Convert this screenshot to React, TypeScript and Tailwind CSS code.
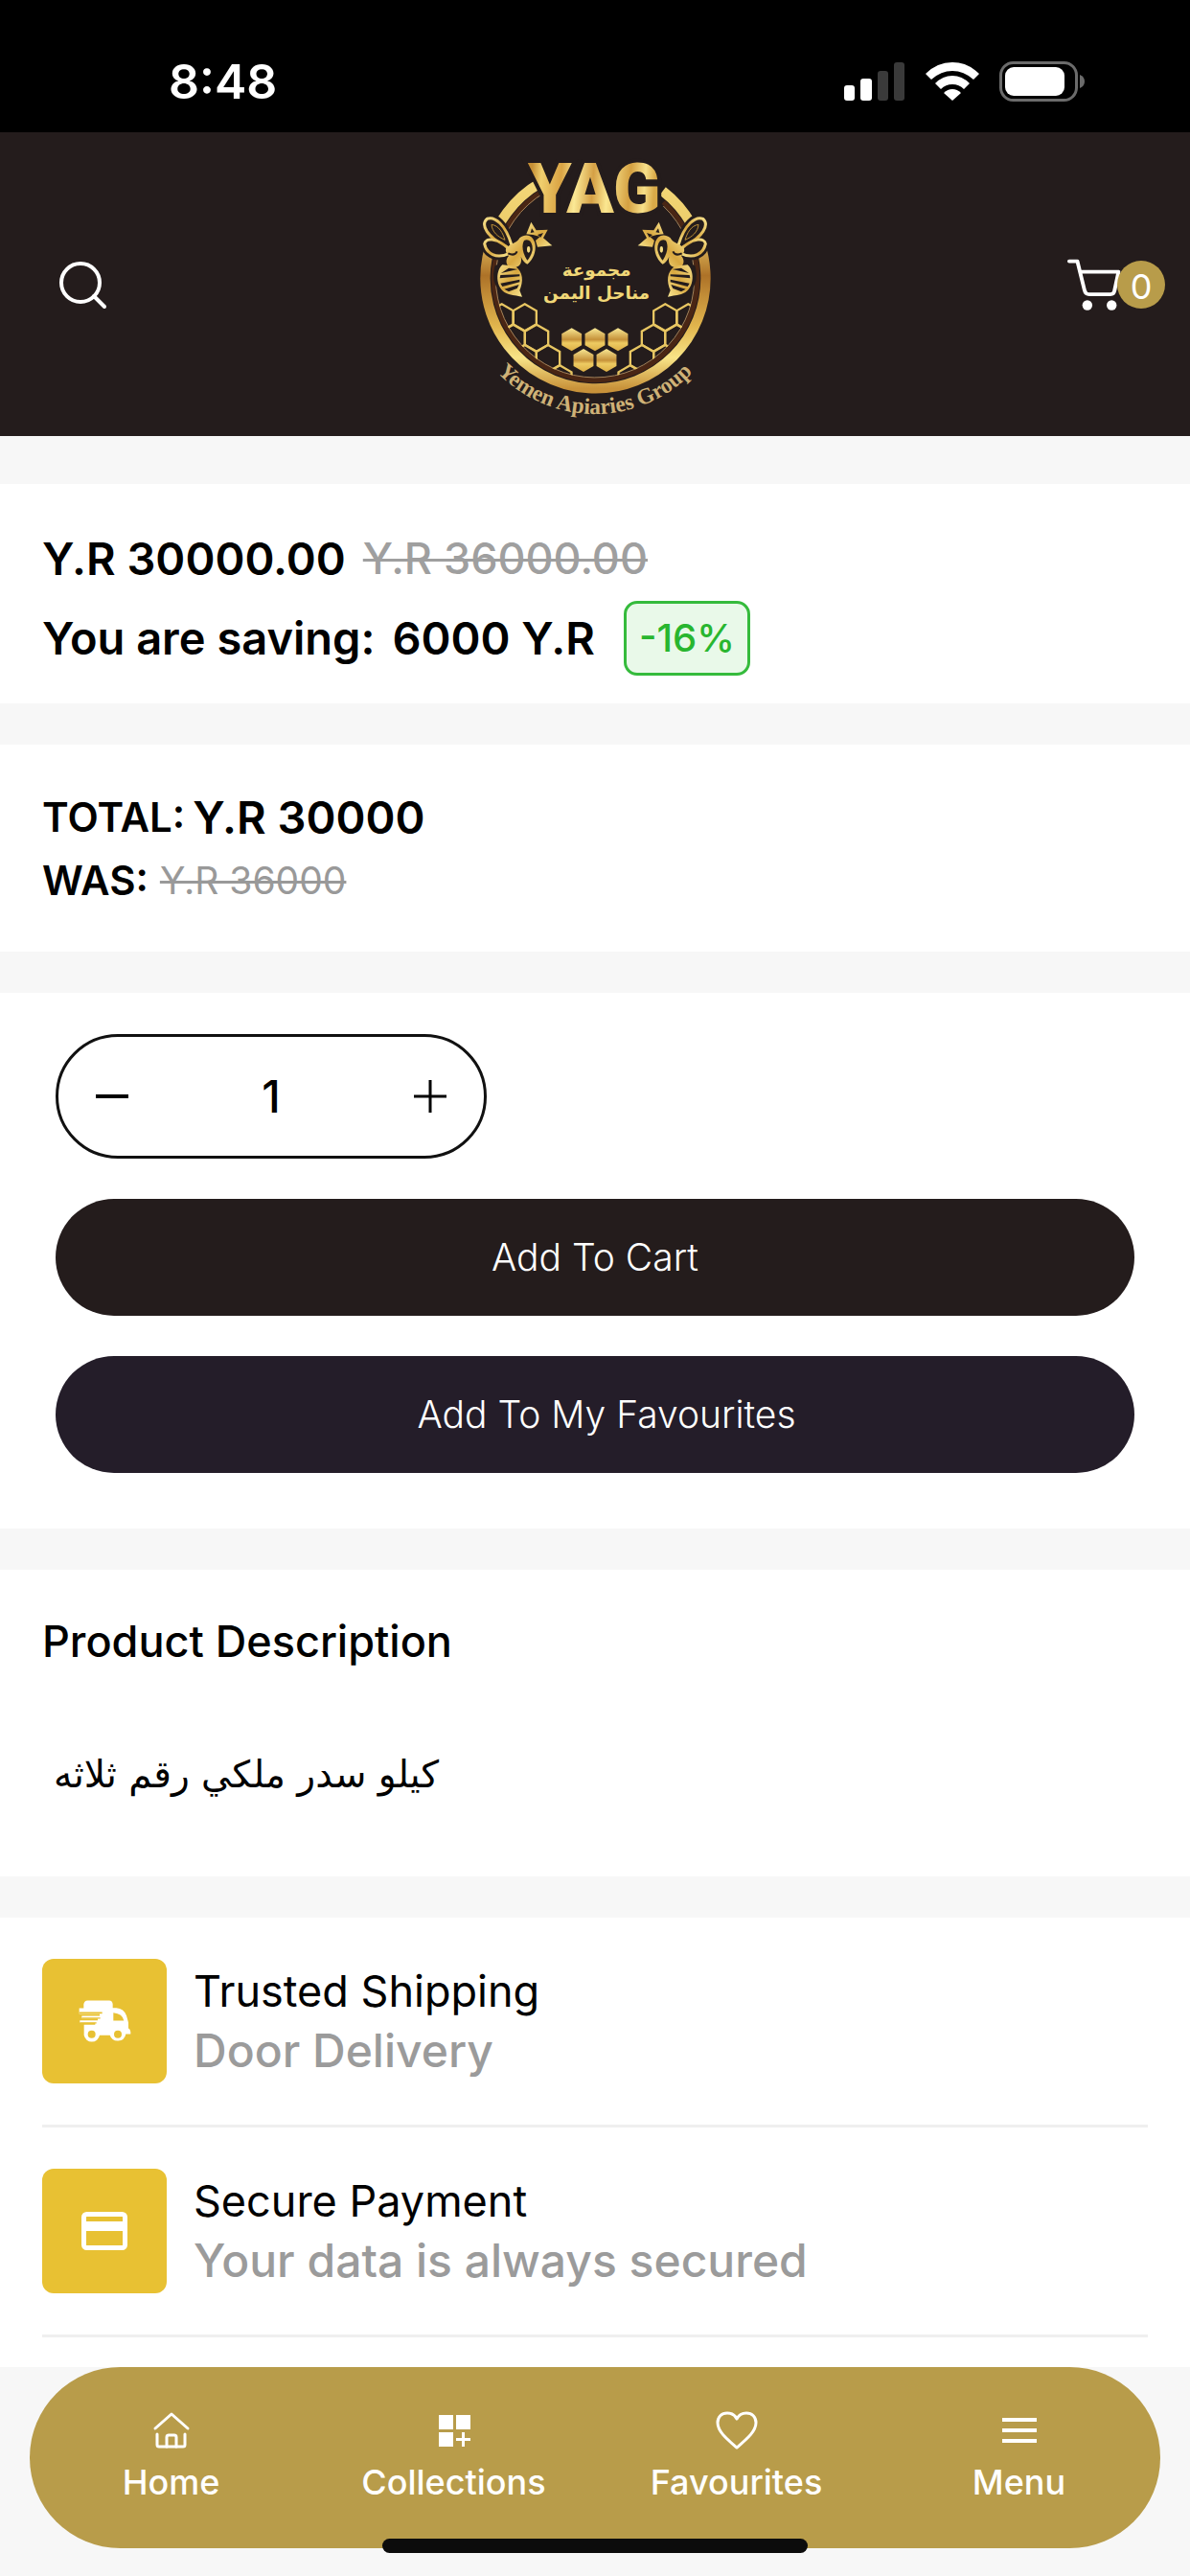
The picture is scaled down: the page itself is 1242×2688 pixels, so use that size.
import { useState } from 'react';
import type { ReactNode } from 'react';

const sideHexes = [
  [128, 553],
  [200, 553],
  [164, 617],
  [237, 617],
  [200, 681],
  [273, 681],
  [310, 745],
];

const solidHexes = [
  [347, 622],
  [420, 622],
  [492, 622],
  [384, 687],
  [456, 687],
];

function hexPoints(cx: number, cy: number, r: number) {
  const w = r * 0.87;
  return [
    [cx, cy - r],
    [cx + w, cy - r / 2],
    [cx + w, cy + r / 2],
    [cx, cy + r],
    [cx - w, cy + r / 2],
    [cx - w, cy - r / 2],
  ]
    .map((p) => p.join(','))
    .join(' ');
}

function LogoSide() {
  return (
    <g>
      {/* honeycomb */}
      <g clipPath="url(#disc)" fill="none" stroke="#e8c662" strokeWidth="7">
        {sideHexes.map(([x, y], i) => (
          <polygon key={i} points={hexPoints(x, y, 42)} />
        ))}
      </g>
      {/* bee */}
      <g stroke="#241c1c" strokeWidth="26" fill="#241c1c">
        <path d="M160 330C140 260 105 235 82 244C62 262 78 300 150 336Z" />
        <path d="M150 338C110 300 76 305 74 322C80 352 110 372 152 352Z" />
        <path d="M118 400C105 450 140 485 190 486C180 440 200 400 150 385Z" />
      </g>
      <g fill="#241c1c" stroke="url(#gold)" strokeWidth="9">
        <path d="M160 330C140 260 105 235 82 244C62 262 78 300 150 336Z" />
        <path d="M150 338C110 300 76 305 74 322C80 352 110 372 152 352Z" />
      </g>
      <path d="M96 262C120 265 132 290 138 310C115 300 98 285 96 262Z" fill="none" stroke="#b98c35" strokeWidth="3" />
      <path d="M142 335C160 318 175 322 184 304C205 288 225 296 232 320C238 350 222 376 208 386C198 380 192 372 188 362C192 385 185 396 160 398C140 392 138 372 150 360C142 352 138 344 142 335Z" fill="url(#gold)" />
      <path d="M198 312C216 304 226 322 224 342C220 358 214 368 208 374C192 350 190 326 198 312Z" fill="#241c1c" />
      <ellipse cx="212" cy="340" rx="5" ry="10" fill="#f4dc83" />
      <path d="M148 352Q168 362 176 346" fill="none" stroke="#241c1c" strokeWidth="6" />
      <path d="M205 292L220 254L236 280L272 278L258 304L286 328L240 332L234 312L248 300L226 294Z" fill="url(#gold)" />
      <path d="M218 288L222 274L230 286ZM240 294L258 288L250 302Z" fill="#241c1c" />
      <path d="M130 388C105 410 110 470 150 480C168 484 182 486 192 488L184 468C196 440 196 410 170 392Z" fill="url(#gold)" />
      <path d="M126 414L178 402L150 398ZM122 430L184 424L184 418L124 420ZM124 446L184 434L184 442L130 456ZM136 464L182 450L176 462L150 472Z" fill="#241c1c" />
    </g>
  );
}

function Logo() {
  return (
    <svg viewBox="0 0 840 900" className="h-[300px] w-[280px]" role="img" aria-label="Yemen Apiaries Group">
      <defs>
        <linearGradient id="gold" x1="0" x2="1" y1="0" y2="1">
          <stop offset="0" stopColor="#f6e08a" />
          <stop offset="0.5" stopColor="#d9a840" />
          <stop offset="1" stopColor="#f8e691" />
        </linearGradient>
        <linearGradient id="letters" gradientUnits="userSpaceOnUse" x1="225" x2="610" y1="60" y2="90">
          <stop offset="0" stopColor="#c58f35" />
          <stop offset="0.08" stopColor="#f0cf6e" />
          <stop offset="0.24" stopColor="#d9a344" />
          <stop offset="0.36" stopColor="#fbe996" />
          <stop offset="0.5" stopColor="#d5a045" />
          <stop offset="0.62" stopColor="#fbe790" />
          <stop offset="0.8" stopColor="#d4a041" />
          <stop offset="0.92" stopColor="#f7e08a" />
          <stop offset="1" stopColor="#d9a948" />
        </linearGradient>
        <linearGradient id="ring" x1="0" x2="0" y1="0" y2="1">
          <stop offset="0" stopColor="#f3d778" />
          <stop offset="0.25" stopColor="#eccb67" />
          <stop offset="0.45" stopColor="#ad7228" />
          <stop offset="0.7" stopColor="#e2b64e" />
          <stop offset="0.85" stopColor="#f8e487" />
          <stop offset="1" stopColor="#c8923a" />
        </linearGradient>
        <linearGradient id="cell" x1="0" x2="0" y1="0" y2="1">
          <stop offset="0" stopColor="#f8e894" />
          <stop offset="0.5" stopColor="#c6923a" />
          <stop offset="0.65" stopColor="#eecb62" />
          <stop offset="1" stopColor="#dcae45" />
        </linearGradient>
        <clipPath id="disc">
          <circle cx="420" cy="430" r="312" />
        </clipPath>
        <path id="motto" d="M75 678A425 425 0 0 0 765 678" />
      </defs>
      <path d="M248 132A345 345 0 1 0 632 157" fill="none" stroke="url(#ring)" strokeWidth="31" />
      <path d="M258 156A319 319 0 1 0 634 192" fill="none" stroke="#4a2614" strokeWidth="15" />
      <path d="M262 162A311 311 0 1 0 634 204" fill="none" stroke="#a5835a" strokeWidth="3" />
      <LogoSide />
      <g transform="translate(840 0) scale(-1 1)">
        <LogoSide />
      </g>
      {solidHexes.map(([x, y], i) => (
        <polygon key={i} points={hexPoints(x, y, 36)} fill="url(#cell)" />
      ))}
      <text
        x="418"
        y="226"
        fill="url(#letters)"
        stroke="#241c1c"
        strokeWidth="24"
        paintOrder="stroke"
        textAnchor="middle"
        className="font-[Roboto,sans-serif] text-[218px] font-black"
      >
        YAG
      </text>
      <g fill="#f1d878" textAnchor="middle" className="font-['DejaVu_Sans',sans-serif] text-[55px] font-bold">
        <text x="425" y="422">مجموعة</text>
        <text x="425" y="496">مناحل اليمن</text>
      </g>
      <text fill="#cfb277" textAnchor="middle" className="font-['Liberation_Serif',serif] text-[70px] font-bold">
        <textPath href="#motto" startOffset="50%">
          Yemen Apiaries Group
        </textPath>
      </text>
    </svg>
  );
}

function StatusBar() {
  return (
    <div className="flex h-[138px] items-center justify-between bg-black pt-8 pr-[109px] pl-[176px] text-white">
      <span className="text-[50px] leading-none font-semibold">8:48</span>
      <div className="flex items-center gap-[21px]">
        <svg viewBox="0 0 64 40" className="h-10 w-16" fill="currentColor">
          <rect x="0" y="24" width="11" height="16" rx="3" />
          <rect x="17" y="17" width="12" height="23" rx="3" />
          <rect x="35" y="9" width="11" height="31" rx="3" fill="#3a3a3a" />
          <rect x="52" y="0" width="11" height="40" rx="3" fill="#3a3a3a" />
        </svg>
        <svg viewBox="0 0 56 42" className="h-[42px] w-14" fill="currentColor">
          <path d="M0 13Q12 1 28 1T56 13L50 19Q40 10 28 10T6 19Z" />
          <path d="M10 23Q18 15 28 15T46 23L40 29Q35 24 28 24T16 29Z" />
          <path d="M28 41L19 33Q23 29 28 29T37 33Z" />
        </svg>
        <svg viewBox="0 0 90 42" className="h-[42px] w-[90px]">
          <rect x="1.5" y="1.5" width="79" height="39" rx="13" fill="none" stroke="#6b6b6b" strokeWidth="3" />
          <rect x="6" y="6" width="62" height="30" rx="9" fill="white" />
          <path d="M84 14Q89 16 89 21T84 28Z" fill="#6b6b6b" />
        </svg>
      </div>
    </div>
  );
}

function Header() {
  return (
    <header className="grid h-[317px] grid-cols-[1fr_auto_1fr] items-center bg-[#241c1c] text-white">
      <button aria-label="Search" className="ml-[60px] justify-self-start">
        <svg viewBox="0 0 52 52" className="size-[52px]" fill="none" stroke="currentColor" strokeWidth="4" strokeLinecap="round">
          <circle cx="24" cy="24" r="20" />
          <path d="M38 38L49 49" />
        </svg>
      </button>
      <a href="#">
        <Logo />
      </a>
      <button aria-label="Cart" className="mr-[26px] flex items-center justify-self-end">
        <svg viewBox="72 78 172 172" className="size-14" fill="none" stroke="currentColor" strokeWidth="12" strokeLinecap="round" strokeLinejoin="round">
          <path d="M78 89H104L127 182Q130 195 142 195H210Q221 195 223 184L236 123H113" />
          <circle cx="136" cy="230" r="16" fill="currentColor" stroke="none" />
          <circle cx="214" cy="230" r="16" fill="currentColor" stroke="none" />
        </svg>
        <span className="-ml-1 flex size-[50px] items-center justify-center rounded-full bg-[#b89c4a] pt-1 text-[36px] leading-none">
          0
        </span>
      </button>
    </header>
  );
}

function Quantity() {
  const [count, setCount] = useState(1);
  return (
    <div className="flex h-[130px] w-[450px] items-center justify-between rounded-full border-3 border-[#111] px-[38px]">
      <button aria-label="Decrease quantity" onClick={() => setCount(Math.max(1, count - 1))}>
        <svg viewBox="0 0 36 36" className="size-9" stroke="black" strokeWidth="4">
          <path d="M1 18H35" />
        </svg>
      </button>
      <input
        aria-label="Quantity"
        value={count}
        onChange={(e) => setCount(Number(e.target.value) || 1)}
        className="w-40 bg-transparent text-center text-[47px] font-medium outline-none"
      />
      <button aria-label="Increase quantity" onClick={() => setCount(count + 1)}>
        <svg viewBox="0 0 36 36" className="size-9" stroke="black" strokeWidth="3">
          <path d="M1 18H35M18 1V35" />
        </svg>
      </button>
    </div>
  );
}

const truckIcon = (
  <svg viewBox="120 140 165 134" className="h-[45px] w-[55px]" fill="white">
    <path d="M148 141H216Q226 142 227 152V164H238Q262 166 270 188L276 210V228Q284 232 283 246H268A26 26 0 0 1 218 250H186A25 25 0 0 1 137 250V217H172V211H124V203H180V197H130V189H186V183H122V165H136V152Q138 142 148 141Z" />
    <path d="M229 179V204H262Q258 182 229 179Z" fill="#e8c133" />
    <path d="M122 177H194V182H122ZM130 194H188V198H130ZM124 209H176V213H124Z" fill="#e8c133" />
    <circle cx="161" cy="247" r="12" fill="#e8c133" />
    <circle cx="243" cy="247" r="12" fill="#e8c133" />
  </svg>
);

const cardIcon = (
  <svg viewBox="0 0 48 40" className="h-10 w-12" fill="none" stroke="white">
    <rect x="2.5" y="2.5" width="43" height="35" rx="3" strokeWidth="5" />
    <path d="M3 15H45" strokeWidth="10" />
  </svg>
);

function Feature({ icon, title, text }: { icon: ReactNode; title: string; text: string }) {
  return (
    <li className="flex items-center gap-7 border-b-3 border-[#efefef] py-[43px]">
      <span className="flex size-[130px] items-center justify-center rounded-xl bg-[#e8c133]">{icon}</span>
      <div className="leading-[62px]">
        <h3 className="text-[45px]">{title}</h3>
        <p className="text-[48px] font-medium text-[#9b9b9b]">{text}</p>
      </div>
    </li>
  );
}

const navItems = [
  {
    label: 'Home',
    icon: (
      <svg viewBox="0 0 40 40" className="size-10" fill="none" stroke="currentColor" strokeWidth="3" strokeLinecap="round" strokeLinejoin="round">
        <path d="M3 18L20 3L37 18" />
        <path d="M5 24V35Q5 37 7 37H32Q34 37 34 35V24" />
        <path d="M15 37V27Q15 25 17 25H23Q25 25 25 27V37" />
      </svg>
    ),
  },
  {
    label: 'Collections',
    icon: (
      <svg viewBox="0 0 40 40" className="size-10" fill="currentColor">
        <path d="M4 4H19V19H4ZM22 4H37V19H22ZM4 22H19V37H4ZM28 22H31V28H37V31H31V37H28V31H22V28H28Z" />
      </svg>
    ),
  },
  {
    label: 'Favourites',
    icon: (
      <svg viewBox="0 0 44 40" className="h-10 w-11" fill="none" stroke="currentColor" strokeWidth="3" strokeLinejoin="round">
        <path d="M22 38C14 31 2 22 2 12C2 6 6 2 12 2C17 2 20 4 22 8C24 4 27 2 32 2C38 2 42 6 42 12C42 22 30 31 22 38Z" />
      </svg>
    ),
  },
  {
    label: 'Menu',
    icon: (
      <svg viewBox="0 0 40 40" className="size-10" stroke="currentColor" strokeWidth="4">
        <path d="M2 9H38M2 20H38M2 31H38" />
      </svg>
    ),
  },
];

export default function App() {
  return (
    <div className="bg-[#f7f7f7] font-[Inter,sans-serif] text-black">
      <StatusBar />
      <Header />
      <main className="flex flex-col gap-[43px] pt-[50px]">
        <section className="bg-white px-11 pt-[42px] pb-[29px]">
          <p className="flex items-center gap-[18px] text-[47px] leading-[72px] font-semibold">
            Y.R 30000.00
            <s className="text-[45px] font-medium text-[#9f9f9f] decoration-3">Y.R 36000.00</s>
          </p>
          <div className="mt-2 flex items-center gap-[30px]">
            <p className="flex gap-[18px] text-[47px] font-semibold">
              <span>You are saving:</span>
              <span>6000 Y.R</span>
            </p>
            <span className="flex h-[78px] w-[132px] items-center justify-center rounded-[14px] border-3 border-[#35bb3c] bg-[#e9f9e9] text-[40px] font-medium text-[#28b62f]">
              -16%
            </span>
          </div>
        </section>

        <section className="bg-white px-11 pt-[43px] pb-[41px] leading-[66px]">
          <p className="flex items-center gap-2 text-[47px] font-semibold">
            <span className="text-[42px]">TOTAL:</span>
            Y.R 30000
          </p>
          <p className="flex items-center gap-3 text-[42px] font-semibold">
            WAS:
            <s className="text-[39px] font-normal text-[#999] decoration-3">Y.R 36000</s>
          </p>
        </section>

        <section className="flex flex-col gap-[42px] bg-white px-[58px] pt-[43px] pb-[58px] text-[39px] font-light">
          <Quantity />
          <button className="h-[122px] rounded-full bg-[#241c1c] text-white">Add To Cart</button>
          <button className="h-[122px] rounded-full bg-[#241d29] pl-6 text-white">Add To My Favourites</button>
        </section>

        <section className="bg-white px-11 pt-[43px] pb-[74px] leading-[64px]">
          <h2 className="text-[45px] font-medium">Product Description</h2>
          <p lang="ar" className="mt-[75px] px-3 font-['DejaVu_Sans',sans-serif] text-[39px]">
            كيلو سدر ملكي رقم ثلاثه
          </p>
        </section>

        <ul className="bg-white px-11 pb-[31px]">
          <Feature icon={truckIcon} title="Trusted Shipping" text="Door Delivery" />
          <Feature icon={cardIcon} title="Secure Payment" text="Your data is always secured" />
        </ul>
      </main>

      <footer className="relative px-[31px] pb-[29px]">
        <nav className="grid h-[189px] grid-cols-4 rounded-full bg-[#b89c4a] text-white">
          {navItems.map((item) => (
            <a key={item.label} href="#" className="flex flex-col items-center gap-2 pt-[46px] text-[36px] leading-[52px] font-medium">
              {item.icon}
              {item.label}
            </a>
          ))}
        </nav>
        <div className="absolute bottom-6 left-1/2 h-[15px] w-[444px] -translate-x-1/2 rounded-full bg-[#0c0c0c]" />
      </footer>
    </div>
  );
}
